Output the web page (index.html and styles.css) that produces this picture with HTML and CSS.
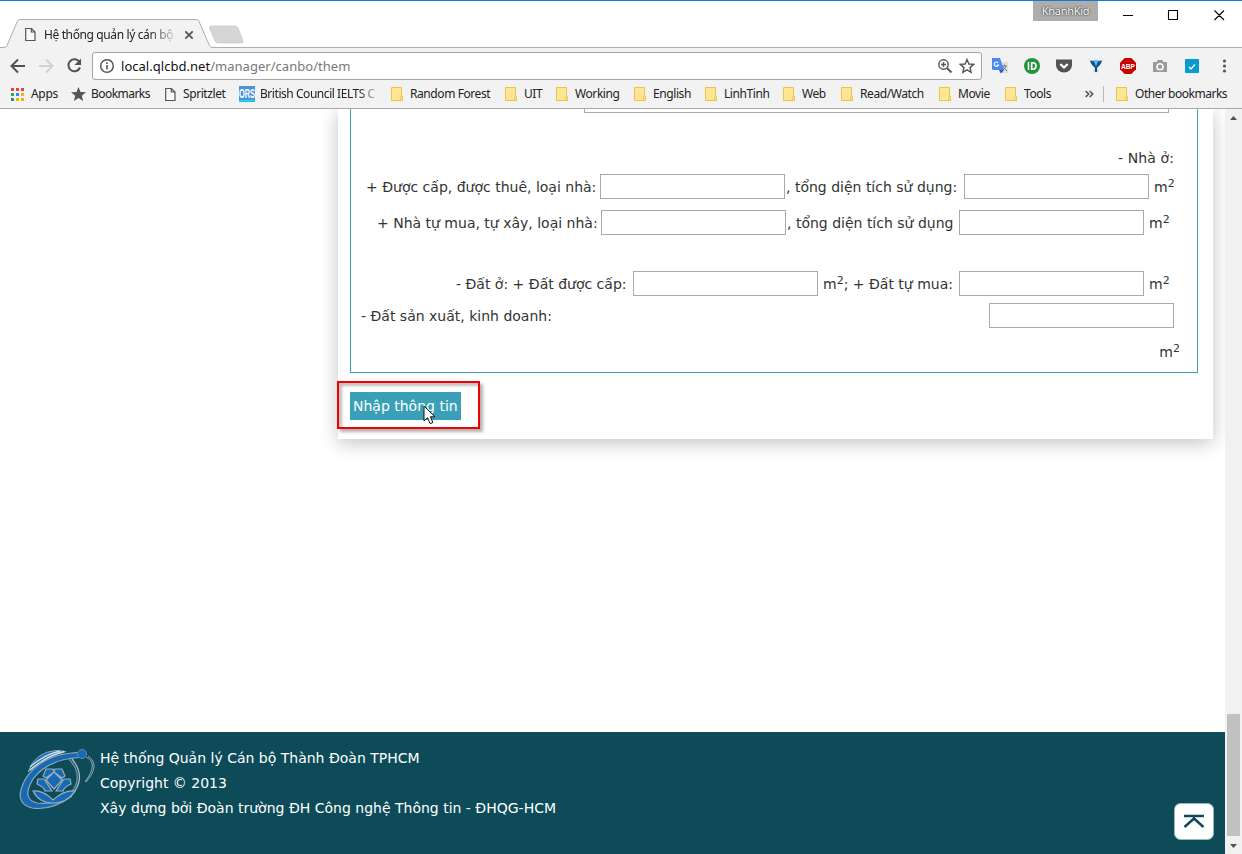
FILE: index.html
```html
<!DOCTYPE html>
<html lang="vi">
<head>
<meta charset="utf-8">
<title>Hệ thống quản lý cán bộ</title>
<link rel="stylesheet" href="styles.css">
</head>
<body>
<svg class="defs" width="0" height="0">
  <defs>
    <symbol id="page" viewBox="0 0 11 15"><path d="M.7 1.500h5.800L10 5v8.500H.7zM6.300 1.500V5H10" fill="#fff" fill-opacity=".6" stroke="#555" stroke-width="1.200"/></symbol>
    <symbol id="folder" viewBox="0 0 12 14"><path d="M.5.500h10v9h1v4H.5z" fill="#ffe694" stroke="#ecc44c"/><path d="M9.500 13.500v-3q0-1 1-1t1 1v3z" fill="#ffe694" stroke="#ecc44c"/></symbol>
  </defs>
</svg>
<header class="chrome">
  <div class="tabstrip">
    <svg class="tab-shape" width="1242" height="48" viewBox="0 0 1242 48">
      <path d="M0 47.500H4Q6 47.500 7 45.500L17.500 21Q18.500 19.500 20 19.500H196Q198 19.500 199 21.500L209.500 45.500Q210.500 47.500 212 47.500H1242V49H0z" fill="#f2f2f2" stroke="#aeaeae"/>
      <path d="M211 26H235Q237 26 238 28L243 41Q243.500 43 241 43H218Q216 43 215 41L209.500 28Q209 26 211 26z" fill="#d6d6d6" stroke="#c6c6c6" stroke-width=".7"/>
    </svg>
    <div class="tab">
      <svg width="11" height="15"><use href="#page"/></svg>
      <span class="tab-title">Hệ thống quản lý cán bộ</span>
      <svg width="10" height="10" viewBox="0 0 10 10"><path d="M1.300 1.300l7.400 7.400M8.700 1.300L1.300 8.700" stroke="#555" stroke-width="1.800"/></svg>
    </div>
    <div class="profile">KhanhKid</div>
    <svg class="window-buttons" width="120" height="30" viewBox="0 0 120 30"><path d="M1 15.500h10M46.500 10.500h9v9h-9zM92.500 10.500l9.500 9.500M102 10.500L92.500 20" fill="none" stroke="#000" stroke-width="1.100"/></svg>
  </div>
  <div class="toolbar">
    <svg width="82" height="24" viewBox="0 0 82 24" fill="none" stroke="#515151" stroke-width="2">
      <path d="M15 12H2M8 5.500L1.500 12 8 18.500"/>
      <path d="M29 12h13M36 5.500l6.500 6.500-6.500 6.500" stroke="#d2d2d2"/>
      <path d="M69.500 8A6 6 0 1 0 70 13.500"/><path d="M71 4.500v6.500h-6.500z" fill="#515151" stroke="none"/>
    </svg>
    <div class="omnibox">
      <svg width="16" height="16" viewBox="0 0 16 16"><circle cx="8" cy="8" r="6.300" fill="none" stroke="#555" stroke-width="1.500"/><path d="M8 4.200v1.700M8 7v4.500" stroke="#555" stroke-width="1.600"/></svg>
      <span class="url">local.qlcbd.net<em>/manager/canbo/them</em></span>
      <svg width="16" height="16" viewBox="0 0 16 16" fill="none" stroke="#555" stroke-width="1.400"><circle cx="6.500" cy="6.500" r="4.700"/><path d="M10 10l4.500 4.500" stroke-width="2"/><path d="M4 6.500h5M6.500 4v5"/></svg>
      <svg width="16" height="16" viewBox="0 0 16 16"><path d="M8 1.500l1.900 4.500 4.800.4-3.700 3.200 1.100 4.700L8 11.800l-4.100 2.500L5 9.600 1.300 6.400 6.100 6z" fill="none" stroke="#555" stroke-width="1.400"/></svg>
    </div>
    <div class="extensions">
      <svg viewBox="0 0 16 16"><path d="M6 4h10v11H7z" fill="#dedede"/><path d="M0 0h8l4 12H1L0 11z" fill="#4a89f3"/><path d="M7 12h5l-3 3.500z" fill="#3551bd"/><path d="M6.300 5A2.200 2.200 0 1 0 6.500 7H4.700" fill="none" stroke="#fff" stroke-width="1.200"/><path d="M10 8h5M12.500 6.500V8M14 8q-1 3-3 4M11 9l4 4" stroke="#6d7f8d" fill="none"/></svg>
      <svg viewBox="0 0 16 16"><circle cx="8" cy="8" r="8" fill="#24913c"/><path d="M4.500 4v8M7.700 4.800h1.100a3.200 3.200 0 0 1 0 6.400H7.700z" fill="none" stroke="#fff" stroke-width="1.600"/></svg>
      <svg viewBox="0 0 16 16"><path d="M0 1.500h16V7a8 7.500 0 0 1-16 0z" fill="#535353"/><path d="M4.300 6L8 9.500 11.700 6" fill="none" stroke="#fff" stroke-width="2.200"/></svg>
      <svg viewBox="0 0 16 16"><path d="M1 1h14l-1 6-4 4v4H6v-4L2 7z" fill="#fff" stroke="#e4e4e4"/><path d="M2 2.500Q5 2 8 4 11 2 14 2.500 13 7 9.200 9.500V14H6.800V9.500Q3 7 2 2.500z" fill="#164f8d"/><path d="M5.500 2h5L8 8.500z" fill="#54bef1"/></svg>
      <svg viewBox="0 0 16 16"><path d="M4.700 0h6.600L16 4.700v6.600L11.300 16H4.700L0 11.300V4.700z" fill="#c70000"/><text x="1" y="10.700" class="abp" textLength="14" lengthAdjust="spacingAndGlyphs">ABP</text></svg>
      <svg viewBox="0 0 16 16"><path d="M1 4h3.500L6 2h4l1.500 2H15v10H1z" fill="#9a9a9a"/><circle cx="8" cy="8.800" r="3" fill="#9a9a9a" stroke="#fff" stroke-width="1.500"/></svg>
      <svg viewBox="0 0 16 16"><rect x="1" y="1" width="14" height="14" rx="1" fill="#089bd0"/><path d="M5 9l2 2 4-4.500" fill="none" stroke="#fff" stroke-width="1.300"/></svg>
      <svg viewBox="0 0 16 16" fill="#555"><circle cx="8.500" cy="3" r="1.600"/><circle cx="8.500" cy="8" r="1.600"/><circle cx="8.500" cy="13" r="1.600"/></svg>
    </div>
  </div>
  <nav class="bookmarks">
    <span class="bm"><svg width="14" height="13" viewBox="0 0 14 13"><path d="M0 0h3v3H0zM5 0h3v3H5zM10 0h3v3h-3z" fill="#ea4335"/><path d="M0 5h3v3H0z" fill="#34a853"/><path d="M5 5h3v3H5z" fill="#3686f7"/><path d="M10 5h3v3h-3zM5 10h3v3H5zM10 10h3v3h-3z" fill="#f6b400"/><path d="M0 10h3v3H0z" fill="#239650"/></svg><b>Apps</b></span>
    <span class="bm"><svg width="15" height="14" viewBox="0 0 15 14"><path d="M7.500 0l2 4.900 5.500.4-4.200 3.500 1.300 5.200-4.600-2.900L2.900 14l1.300-5.200L0 5.300l5.500-.4z" fill="#555"/></svg><b>Bookmarks</b></span>
    <span class="bm"><svg width="11" height="15"><use href="#page"/></svg><b>Spritzlet</b></span>
    <span class="bm"><svg width="16" height="16" viewBox="0 0 16 16"><path d="M0 0h16v16H0z" fill="#4794d7"/><path d="M0 14h16v1.500H0z" fill="#20d9ed"/><text x="0" y="12" class="ors" textLength="16" lengthAdjust="spacingAndGlyphs">ORS</text></svg><b class="fade">British Council IELTS C</b></span>
    <span class="bm"><svg width="12" height="14"><use href="#folder"/></svg><b>Random Forest</b></span>
    <span class="bm"><svg width="12" height="14"><use href="#folder"/></svg><b>UIT</b></span>
    <span class="bm"><svg width="12" height="14"><use href="#folder"/></svg><b>Working</b></span>
    <span class="bm"><svg width="12" height="14"><use href="#folder"/></svg><b>English</b></span>
    <span class="bm"><svg width="12" height="14"><use href="#folder"/></svg><b>LinhTinh</b></span>
    <span class="bm"><svg width="12" height="14"><use href="#folder"/></svg><b>Web</b></span>
    <span class="bm"><svg width="12" height="14"><use href="#folder"/></svg><b>Read/Watch</b></span>
    <span class="bm"><svg width="12" height="14"><use href="#folder"/></svg><b>Movie</b></span>
    <span class="bm"><svg width="12" height="14"><use href="#folder"/></svg><b>Tools</b></span>
    <svg class="more" width="9" height="8" viewBox="0 0 9 8"><path d="M.7 1L3.700 4 .7 7M4.700 1L7.700 4 4.700 7" fill="none" stroke="#555" stroke-width="1.600"/></svg>
    <span class="bm other"><svg width="12" height="14"><use href="#folder"/></svg><b>Other bookmarks</b></span>
  </nav>
</header>
<div class="view">
  <div class="page">
    <main class="card">
      <section class="fields">
        <div class="textarea"></div>
        <p class="house">- Nhà ở:</p>
        <div class="row granted"><span>+ Được cấp, được thuê, loại nhà:</span><input type="text"><span>, tổng diện tích sử dụng:</span><input type="text"><span class="unit">m<sup>2</sup></span></div>
        <div class="row bought"><span>+ Nhà tự mua, tự xây, loại nhà:</span><input type="text"><span>, tổng diện tích sử dụng</span><input type="text"><span class="unit">m<sup>2</sup></span></div>
        <div class="row land"><span>- Đất ở: + Đất được cấp:</span><input type="text"><span class="unit">m<sup>2</sup>; + Đất tự mua:</span><input type="text"><span class="unit">m<sup>2</sup></span></div>
        <div class="row business"><span>- Đất sản xuất, kinh doanh:</span><input type="text"></div>
        <p class="last-unit">m<sup>2</sup></p>
      </section>
      <div class="actions">
        <button type="button">Nhập thông tin</button>
        <i class="marker"></i>
        <svg class="cursor" width="13" height="21" viewBox="0 0 13 21"><path d="M1 1v15l3.500-3.300 2.700 6 2.700-1.200-2.600-5.700H12z" fill="#fff" stroke="#111"/></svg>
      </div>
    </main>
    <footer>
      <svg class="logo" width="78" height="66" viewBox="0 0 78 66" fill="none">
        <path d="M10 24Q17 4 38 2.500L48 3.500Q27 9 12 22z" fill="#1769b3" stroke="#91a9b8"/>
        <path d="M12 22Q28 8 46 3.500M12 19Q27 6 42 3" stroke="#d5dce0" stroke-width="1.300"/>
        <path d="M62 4.500Q25 5 8 30-6 55 14 60 34 63 54 48 34 57 19 55 3 51 15 31 30 11 62 9.500z" fill="#1769b3" stroke="#91a9b8" stroke-width="1.200"/>
        <path d="M51 11Q66 27 54 44 46 54 34 58" stroke="#6f93ab" stroke-width="1.300"/>
        <path d="M54 11Q69 29 54 47" stroke="#b3c1c9" stroke-width="1.200"/>
        <path d="M68 9Q81 15 67 34M70 8Q83 17 68 34" stroke="#91a9b8"/>
        <circle cx="64" cy="6" r="4.500" fill="#1769b3" stroke="#648ba8"/>
        <path d="M36 24l8 8-8 9-8-9zM28 30l-3-2 3-7h7l1 3zM44 30l3-2-3-7h-7l-1 3zM20 31h6l8 12h-7q-1-4-8-7zM52 31h-6l-8 12h7q1-4 8-7zM15 43q10-1 20 9 11-10 22-9-8 12-22 12T15 43z" fill="#1769b3" stroke="#9bb0bd" stroke-width="1.200"/>
      </svg>
      <div class="credits"><p>Hệ thống Quản lý Cán bộ Thành Đoàn TPHCM</p><p>Copyright © 2013</p><p>Xây dựng bởi Đoàn trường ĐH Công nghệ Thông tin - ĐHQG-HCM</p></div>
      <svg class="to-top" width="40" height="37" viewBox="0 0 40 37"><rect x=".5" y=".5" width="39" height="36" rx="6" fill="#fff" stroke="#9db5bb"/><path d="M10 13h20M10.500 24L20 15.500 29.500 24" fill="none" stroke="#0d4b59" stroke-width="2.500"/></svg>
    </footer>
  </div>
  <div class="scrollbar"><svg width="7" height="4"><path d="M0 4L3.500 0 7 4z" fill="#505050"/></svg><i></i><svg width="7" height="4"><path d="M0 0h7L3.500 4z" fill="#505050"/></svg></div>
</div>
</body>
</html>
```
FILE: styles.css
```css
* { box-sizing: border-box; }
html, body { height: 100%; }
body { margin: 0; background: #fff; overflow: hidden; font: 12px "Noto Sans", sans-serif; color: #222; }
svg { display: block; flex: none; }
.defs { position: absolute; }
p { margin: 0; }

.chrome { height: 109px; background: #f2f2f2; border-bottom: 1px solid #a9a9a9; }
.tabstrip { position: relative; height: 48px; display: flex; align-items: flex-start; background: #fff; border-top: 1px solid #1979ca; }
.tab-shape { position: absolute; left: 0; top: -1px; }
.tab { position: relative; display: flex; align-items: center; width: 196px; height: 27px; margin: 20px auto 0 0; padding-left: 25px; }
.tab-title { width: 135px; margin: 0 5px 0 8px; white-space: nowrap; letter-spacing: -.38px; -webkit-mask-image: linear-gradient(to right, #000 105px, transparent 135px); }
.profile { width: 65px; height: 20px; margin-right: 24px; background: #adadad; color: #fff; font-size: 11px; line-height: 20px; letter-spacing: -.3px; text-align: center; text-shadow: 0 0 2px #333, 0 0 1px #333; }
.window-buttons { position: relative; width: 120px; margin-top: -1px; }

.toolbar { display: flex; align-items: center; height: 36px; padding-left: 10px; }
.omnibox { display: flex; align-items: center; width: 890px; height: 28px; padding: 0 6px; background: #fff; border: 1px solid #a6a6a6; border-radius: 3px; }
.url { flex: 1; margin-left: 6px; font-size: 13px; color: #111; white-space: nowrap; letter-spacing: .03px; }
.url em { font-style: normal; color: #777; }
.omnibox svg + svg { margin-left: 6px; }
.extensions { display: flex; gap: 16px; margin-left: 10px; }
.extensions svg { width: 16px; height: 16px; }
.abp { font: bold 7px "Liberation Sans", sans-serif; fill: #fff; }
.ors { font: bold 12px "Liberation Sans", sans-serif; fill: #fff; }

.bookmarks { display: grid; grid-template-columns: 60px 94px 74px 152px 114px 51px 78px 71px 78px 58px 98px 66px 80px 18px 1fr; align-items: center; height: 20px; padding-left: 11px; }
.bm { display: flex; align-items: center; min-width: 0; white-space: nowrap; }
.bm b { font-weight: normal; margin: -1px 0 0 7px; letter-spacing: -.42px; }
.bm:nth-child(1) b { margin-left: 6px; letter-spacing: -.3px; }
.bm:nth-child(2) b { margin-left: 5px; letter-spacing: -.55px; }
.bm .fade { width: 122px; margin-left: 5px; letter-spacing: -.45px; -webkit-mask-image: linear-gradient(to right, #000 98px, transparent 122px); }
.other { padding-left: 12px; height: 16px; border-left: 1px solid #b8b8b8; }
.other b { letter-spacing: -.48px; }

.view { display: flex; height: 745px; }
.page { width: 1225px; display: flex; flex-direction: column; overflow: hidden; font: 14px "DejaVu Sans", sans-serif; color: #333; }
.card { width: 875px; height: 330px; margin-left: 338px; padding-left: 12px; background: #fff; box-shadow: 0 4px 18px rgba(0, 0, 0, .24); }
.fields { width: 848px; height: 264px; border: 1px solid #3aa0b8; border-top: 0; display: flex; flex-direction: column; }
.textarea { width: 585px; height: 4px; margin-left: 233px; border: 1px solid #a9a9a9; border-top: 0; }
.house { height: 20px; line-height: 20px; margin: 35px 23px 6px 0; text-align: right; letter-spacing: .1px; }
.row { display: grid; align-items: center; height: 25px; white-space: nowrap; }
.row input { width: 185px; height: 25px; margin: 0; padding: 0; border: 1px solid #a9a9a9; background: #fff; }
.granted { grid-template-columns: 234px 186px 178px 190px auto; margin-left: 15px; }
.bought { grid-template-columns: 224px 186px 172px 190px auto; margin: 11px 0 0 26px; }
.land { grid-template-columns: 177px 190px 136px 190px auto; margin: 36px 0 0 105px; }
.business { grid-template-columns: 628px 185px; margin: 7px 0 0 10px; }
sup { font-size: 11px; line-height: 0; vertical-align: 5px; }
.last-unit { height: 20px; line-height: 20px; margin: 14px 17px 0 0; text-align: right; }
.actions { position: relative; padding-top: 19px; }
button { display: block; width: 111px; height: 28px; padding: 0 0 0 3px; border: 0; background: #3aa0b8; color: #fff; font: 14px "DejaVu Sans", sans-serif; text-align: left; white-space: nowrap; }
.marker { position: absolute; left: -13px; top: 8px; width: 143px; height: 48px; border: 2px solid #f00000; box-shadow: 3px 3px 3px rgba(0, 0, 0, .3), inset 3px 3px 3px rgba(0, 0, 0, .25); }
.cursor { position: absolute; left: 73px; top: 32px; }

footer { display: flex; height: 122px; margin-top: auto; padding-left: 18px; background: #0d4b59; color: #fff; }
.logo { margin-top: 16px; }
.credits { flex: 1; margin: 14px 0 0 4px; line-height: 25px; }
.to-top { margin: 71px 11px 0 0; }

.scrollbar { width: 17px; display: flex; flex-direction: column; align-items: center; padding: 7px 0 6px; background: #f1f1f1; }
.scrollbar i { width: 13px; height: 122px; margin: auto 0 8px; background: #c1c1c1; }
```
